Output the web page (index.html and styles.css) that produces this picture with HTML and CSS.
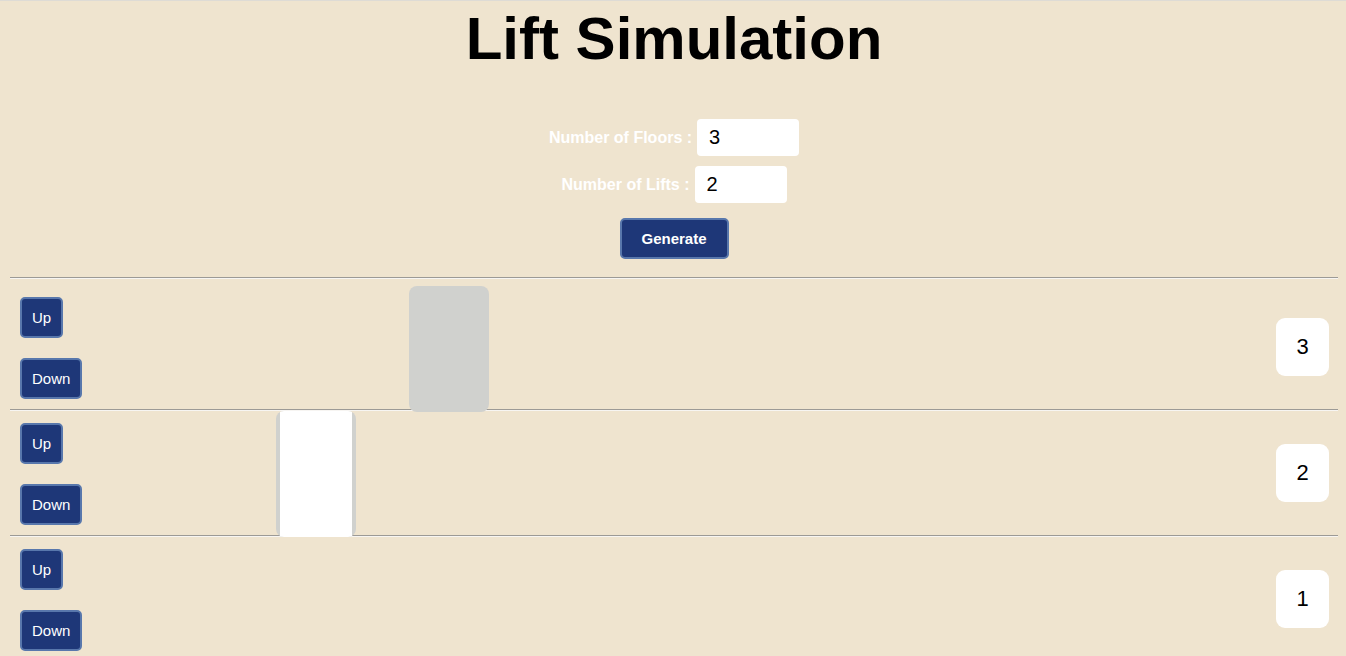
FILE: index.html
```html
<!DOCTYPE html>
<html>
<head>
<meta charset="utf-8">
<title>Lift Simulation</title>
<link rel="stylesheet" href="styles.css">
</head>
<body>
<h1 class="title">Lift Simulation</h1>
<form class="controls">
  <div class="row">
    <label class="label">Number of Floors :</label>
    <input class="field field-floors" type="text" value="3">
  </div>
  <div class="row">
    <label class="label">Number of Lifts :</label>
    <input class="field field-lifts" type="text" value="2">
  </div>
  <button type="button" class="generate">Generate</button>
</form>
<div class="rule"></div>
<div class="building">
  <div class="floor">
    <div class="calls">
      <button type="button" class="call">Up</button>
      <button type="button" class="call">Down</button>
    </div>
    <div class="floor-no">3</div>
  </div>
  <div class="rule"></div>
  <div class="floor">
    <div class="calls">
      <button type="button" class="call">Up</button>
      <button type="button" class="call">Down</button>
    </div>
    <div class="floor-no">2</div>
  </div>
  <div class="rule"></div>
  <div class="floor">
    <div class="calls">
      <button type="button" class="call">Up</button>
      <button type="button" class="call">Down</button>
    </div>
    <div class="floor-no">1</div>
  </div>
  <div class="rule"></div>
  <div class="lift lift-open lift-a"><div class="lift-inside"></div></div>
  <div class="lift lift-b"></div>
</div>
</body>
</html>
```
FILE: styles.css
```css
html {
  background: #efe4cf;
  border-top: 1px solid #dedbd5;
}
body {
  margin: 0 8px 0 10px;
  font-family: "Liberation Sans", Arial, sans-serif;
  background: #efe4cf;
  overflow: hidden;
}
.title {
  margin: 3px 0 0;
  text-align: center;
  font-size: 60px;
  font-weight: bold;
  line-height: 69px;
  color: #000;
}
.controls {
  display: flex;
  flex-direction: column;
  align-items: center;
  margin-top: 46px;
}
.row {
  display: flex;
  align-items: center;
  gap: 5px;
  margin-bottom: 10px;
}
.label {
  color: #fff;
  font-size: 16px;
  font-weight: bold;
}
.field {
  box-sizing: border-box;
  height: 37px;
  border: none;
  border-radius: 4px;
  background: #fff;
  font-family: "Liberation Sans", Arial, sans-serif;
  font-size: 20px;
  color: #000;
  outline: none;
}
.field-floors {
  width: 102px;
  padding-left: 12px;
}
.field-lifts {
  width: 92px;
  padding-left: 12px;
}
.generate {
  box-sizing: border-box;
  margin-top: 5px;
  width: 109px;
  height: 41px;
  background: #1e3778;
  border: 2px solid #5877ac;
  border-radius: 5px;
  color: #fff;
  font-family: "Liberation Sans", Arial, sans-serif;
  font-size: 15px;
  font-weight: bold;
}
.rule {
  height: 0;
  border-top: 1px solid #9c9a96;
  border-bottom: 1px solid #f7f5f2;
}
.controls + .rule {
  margin-top: 18px;
  margin-bottom: 6px;
}
.building {
  position: relative;
}
.floor {
  height: 124px;
  display: flex;
  justify-content: space-between;
  align-items: center;
  padding: 0 9px 0 10px;
}
.calls {
  align-self: flex-start;
  display: flex;
  flex-direction: column;
  align-items: flex-start;
  gap: 20px;
  padding-top: 12px;
}
.call {
  box-sizing: border-box;
  height: 41px;
  padding: 0 10px;
  background: #1e3778;
  border: 2px solid #5877ac;
  border-radius: 5px;
  color: #fff;
  font-family: "Liberation Sans", Arial, sans-serif;
  font-size: 15px;
}
.floor-no {
  width: 53px;
  height: 58px;
  display: flex;
  align-items: center;
  justify-content: center;
  background: #fff;
  border-radius: 9px;
  font-size: 22px;
  color: #000;
}
.lift {
  position: absolute;
  width: 80px;
  height: 126px;
  background: #d0d1ce;
  border-radius: 8px;
  overflow: hidden;
}
.lift-a {
  left: 266px;
  top: 126px;
}
.lift-b {
  left: 399px;
  top: 1px;
}
.lift-inside {
  margin: 0 4px;
  height: 100%;
  background: #fff;
}
```
